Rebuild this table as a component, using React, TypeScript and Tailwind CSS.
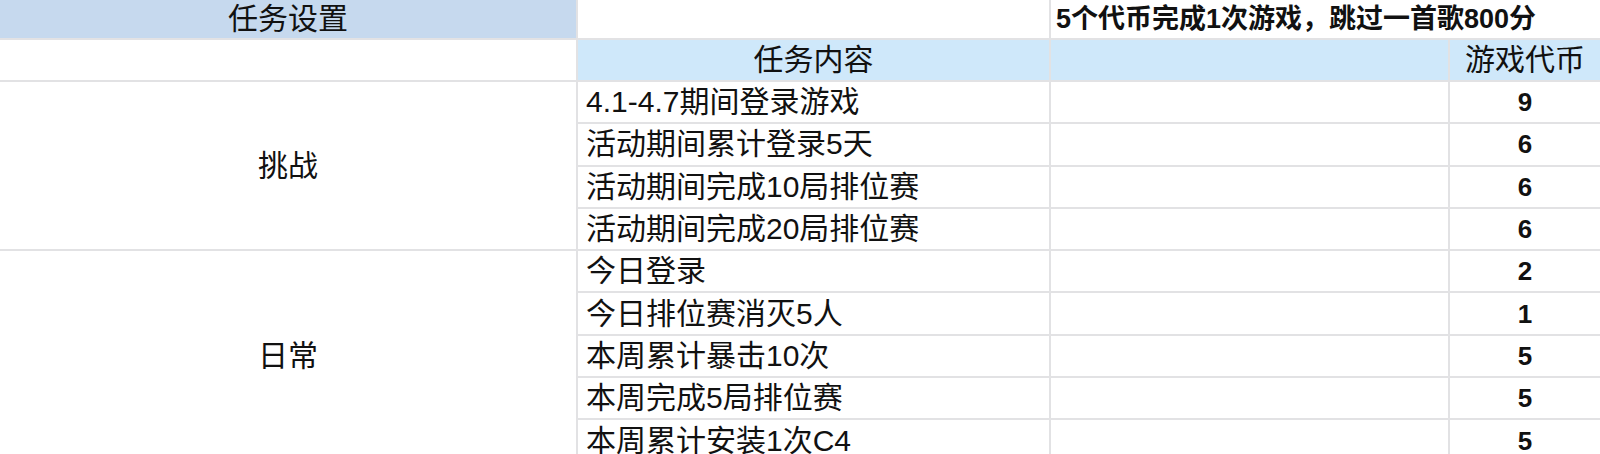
import React from "react";

const challenge = [
  { task: "4.1-4.7期间登录游戏", coins: 9 },
  { task: "活动期间累计登录5天", coins: 6 },
  { task: "活动期间完成10局排位赛", coins: 6 },
  { task: "活动期间完成20局排位赛", coins: 6 },
];

const daily = [
  { task: "今日登录", coins: 2 },
  { task: "今日排位赛消灭5人", coins: 1 },
  { task: "本周累计暴击10次", coins: 5 },
  { task: "本周完成5局排位赛", coins: 5 },
  { task: "本周累计安装1次C4", coins: 5 },
];

const TaskRows = ({ rows }: { rows: { task: string; coins: number }[] }) => (
  <>
    {rows.map((r) => (
      <React.Fragment key={r.task}>
        <div className="bg-white flex items-center pl-2 text-[30px]">{r.task}</div>
        <div className="bg-white" />
        <div className="bg-white flex items-center justify-center text-[26px] font-bold">{r.coins}</div>
      </React.Fragment>
    ))}
  </>
);

export default function App() {
  return (
    <div className="w-[1600px] h-[454px] overflow-hidden bg-white">
      <div className="grid grid-cols-[576px_471px_397px_1fr] grid-rows-[38px_40px_repeat(9,40.3px)] gap-[2px] bg-[#e2e2e4] text-[#111] leading-none font-['Liberation_Sans','Noto_Sans_CJK_SC',sans-serif]">
        {/* header row */}
        <div className="bg-[#c6d9ee] flex items-center justify-center text-[30px]">任务设置</div>
        <div className="bg-white" />
        <div className="col-span-2 bg-white flex items-center pl-[5px] text-[27px] font-bold">
          5个代币完成1次游戏，跳过一首歌800分
        </div>

        {/* column titles */}
        <div className="bg-white" />
        <div className="bg-[#cfe8fa] flex items-center justify-center text-[30px]">任务内容</div>
        <div className="bg-[#cfe8fa]" />
        <div className="bg-[#cfe8fa] flex items-center justify-center text-[30px]">游戏代币</div>

        {/* challenge group */}
        <div className="row-span-4 bg-white flex items-center justify-center text-[30px]">挑战</div>
        <TaskRows rows={challenge} />

        {/* daily group */}
        <div className="row-span-5 bg-white flex items-center justify-center text-[30px]">日常</div>
        <TaskRows rows={daily} />
      </div>
    </div>
  );
}
